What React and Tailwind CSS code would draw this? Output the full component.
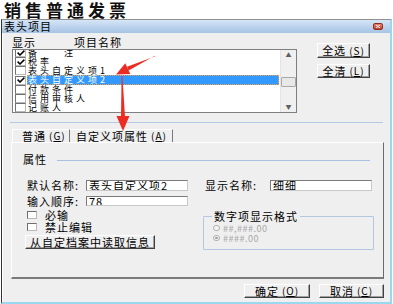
import React from "react";

function Check({ checked, className = "" }) {
  return (
    <span className={"flex items-center justify-center shrink-0 bg-white border border-t-[#707070] border-l-[#707070] border-r-[#b8b8b8] border-b-[#b8b8b8] " + className}>
      {checked && (
        <svg width="8" height="6" viewBox="0 0 8 6">
          <path d="M0.6 2.6 L3 5 L7.4 0.6" stroke="#000" strokeWidth="1.5" fill="none" />
        </svg>
      )}
    </span>
  );
}

function Row({ checked, selected, children }) {
  return (
    <div className={"flex items-center " + (selected ? "h-[10px]" : "h-[9px]")}>
      <Check checked={checked} className="ml-[2px] w-[11px] h-[9px]" />
      {selected ? (
        <span className="ml-[1px] mr-[1px] flex-1 h-[10px] flex items-center bg-[#3399ff] border border-dotted border-[#f5a040] text-white text-[9px] leading-[8px] tracking-[3px]">
          {children}
        </span>
      ) : (
        <span className="ml-[2px] text-[9px] leading-[9px] tracking-[3px] flex items-center">{children}</span>
      )}
    </div>
  );
}

const btn =
  "flex items-center justify-center bg-[#efefef] border border-t-white border-l-white border-r-[#404040] border-b-[#404040] shadow-[inset_-1px_-1px_0_#a0a0a0] text-[11px] leading-none text-black tracking-[1px]";

const sunken =
  "bg-white border border-t-[#7a7a7a] border-l-[#7a7a7a] border-r-[#c8c8c8] border-b-[#c8c8c8] text-[11px] leading-[9px] tracking-[1px] pl-[2px] flex items-center overflow-hidden";

export default function App() {
  return (
    <div className="relative w-[393px] h-[304px] overflow-hidden bg-white text-black font-[family-name:'Noto_Sans_CJK_SC','Liberation_Sans',sans-serif]">
      <div className="h-[19px] pl-[4px] pt-[1px] text-[17px] leading-[18px] font-semibold tracking-[4px] text-[#111]">
        销售普通发票
      </div>

      <div className="ml-px w-[391px] h-[285px] flex flex-col border-t border-t-[#909090] border-l border-l-[#333333] border-r-2 border-r-[#9ad8f0] border-b-2 border-b-[#9ad8f0]">
        {/* title bar */}
        <div className="h-[13px] shrink-0 flex items-center bg-linear-to-b from-[#d6e5f6] to-[#a6c3e5] pl-[2px] pr-[7px]">
          <span className="text-[11px] leading-none tracking-[1px]">表头项目</span>
          <span className="ml-auto w-[10px] h-[7px] rounded-[2px] bg-linear-to-b from-[#e8826c] to-[#c7402c] border border-[#8e2f22] flex items-center justify-center">
            <svg width="4" height="3" viewBox="0 0 4 3">
              <path d="M0 0 L4 3 M4 0 L0 3" stroke="#fff" strokeWidth="0.9" />
            </svg>
          </span>
        </div>

        {/* body */}
        <div className="flex-1 bg-[#efefef] border-l border-l-white flex flex-col">
          <div className="mt-[3px] flex">
            <div className="ml-[9px] flex flex-col">
              <div className="h-[13px] flex items-center text-[11px] leading-none tracking-[1px]">
                <span className="w-[62px]">显示</span>
                <span>项目名称</span>
              </div>
              <div className="w-[285px] h-[64px] bg-white border border-[#7f7f7f] flex overflow-hidden">
                <div className="flex-1 flex flex-col -mt-[2px]">
                  <Row checked>
                    <span>备</span>
                    <span className="ml-[24px]">注</span>
                  </Row>
                  <Row checked>税率</Row>
                  <Row>表头自定义项1</Row>
                  <Row checked selected>表头自定义项2</Row>
                  <Row>付款条件</Row>
                  <Row>信用审核人</Row>
                  <Row>记账人</Row>
                </div>
                <div className="w-[16px] bg-[#f0f0f0] border-l border-l-[#e4e4e4] flex flex-col items-center">
                  <span className="mt-[2px] text-[6px] leading-none text-[#606060]">▲</span>
                  <span className="mt-[19px] w-[15px] h-[10px] bg-[#e8e8e8] border border-[#a8a8a8] rounded-[1px]"></span>
                  <span className="mt-auto mb-[2px] text-[6px] leading-none text-[#606060]">▼</span>
                </div>
              </div>
            </div>
            <div className="ml-[20px] pt-[7px] flex flex-col">
              <div className={btn + " w-[53px] h-[15px]"}>
                全选<span className="ml-[3px] text-[10px]">(<u>S</u>)</span>
              </div>
              <div className={btn + " mt-[6px] w-[53px] h-[14px]"}>
                全清<span className="ml-[3px] text-[10px]">(<u>L</u>)</span>
              </div>
            </div>
          </div>

          <div className="mt-[9px] ml-[7px] w-[373px] h-px bg-[#b4c9e4]"></div>

          {/* tabs */}
          <div className="mt-[6px] ml-[9px] flex h-[13px]">
            <div className="w-[58px] h-[13px] flex items-center pl-[9px] border-t border-l border-t-white border-l-white border-r border-r-[#7a7a7a] text-[11px] leading-none tracking-[1px]">
              普通<span className="ml-[3px] text-[10px]">(<u>G</u>)</span>
            </div>
            <div className="w-[103px] h-[13px] flex items-center pl-[6px] border-t border-t-white border-r border-r-[#7a7a7a] text-[11px] leading-none tracking-[1px]">
              自定义项属性<span className="ml-[3px] text-[10px]">(<u>A</u>)</span>
            </div>
          </div>

          {/* panel */}
          <div className="ml-[8px] w-[373px] h-[137px] border-t border-l border-t-white border-l-white border-r border-r-[#6a6a6a] border-b-2 border-b-[#7a7a7a] flex flex-col">
            <div className="mt-[10px] h-[12px] pl-[11px] pr-[13px] flex items-center">
              <span className="text-[11px] leading-none tracking-[1px]">属性</span>
              <span className="ml-[10px] mt-[3px] flex-1 h-px bg-[#a8c0e0]"></span>
            </div>

            <div className="mt-[15px] h-[10px] pl-[15px] flex items-center">
              <span className="w-[59px] text-[11px] leading-none tracking-[1px]">默认名称:</span>
              <div className={sunken + " w-[102px] h-[11px] bg-[#f3f3f3]"}>表头自定义项2</div>
              <span className="ml-[17px] w-[65px] text-[11px] leading-none tracking-[1px]">显示名称:</span>
              <div className={sunken + " w-[102px] h-[11px]"}>细细</div>
            </div>

            <div className="flex">
              <div className="w-[191px] flex flex-col">
                <div className="mt-[6px] h-[10px] pl-[15px] flex items-center">
                  <span className="w-[59px] text-[11px] leading-none tracking-[1px]">输入顺序:</span>
                  <div className={sunken + " w-[102px] h-[10px] text-[10px] tracking-[0px]"}>78</div>
                </div>
                <div className="mt-[4px] h-[10px] pl-[15px] flex items-center">
                  <Check className="w-[10px] h-[8px]" />
                  <span className="ml-[8px] text-[11px] leading-none tracking-[1px]">必输</span>
                </div>
                <div className="mt-[2px] h-[10px] pl-[15px] flex items-center">
                  <Check className="w-[10px] h-[8px]" />
                  <span className="ml-[8px] text-[11px] leading-none tracking-[1px]">禁止编辑</span>
                </div>
                <div className={btn + " mt-[3px] ml-[13px] w-[130px] h-[14px]"}>从自定档案中读取信息</div>
              </div>
              <div className="mt-[26px] relative w-[171px] h-[34px] border border-[#b3c7e0] rounded-[1px] flex flex-col pl-[9px]">
                <span className="absolute -top-[7px] left-[8px] px-[2px] bg-[#efefef] text-[11px] leading-[12px] tracking-[1px]">
                  数字项显示格式
                </span>
                <div className="mt-[6px] h-[10px] flex items-center text-[9px] leading-none text-[#a8a8a8] tracking-[0.5px]">
                  <span className="w-[7px] h-[6px] rounded-full border border-[#b0b0b0] bg-[#f4f4f4]"></span>
                  <span className="ml-[3px]">##,###.00</span>
                </div>
                <div className="h-[10px] flex items-center text-[9px] leading-none text-[#a8a8a8] tracking-[0.5px]">
                  <span className="w-[7px] h-[6px] rounded-full border border-[#b0b0b0] bg-[#f4f4f4] flex items-center justify-center">
                    <span className="w-[3px] h-[2px] rounded-full bg-[#a0a0a0]"></span>
                  </span>
                  <span className="ml-[3px]">####.00</span>
                </div>
              </div>
            </div>
          </div>

          <div className="mt-[5px] flex justify-end pr-[6px]">
            <div className={btn + " w-[66px] h-[14px]"}>
              确定<span className="ml-[3px] text-[10px]">(<u>O</u>)</span>
            </div>
            <div className={btn + " ml-[9px] w-[65px] h-[14px]"}>
              取消<span className="ml-[3px] text-[10px]">(<u>C</u>)</span>
            </div>
          </div>
        </div>
      </div>

      {/* red annotation arrows */}
      <svg className="absolute inset-0 pointer-events-none" width="393" height="304" viewBox="0 0 393 304">
        <polygon points="155.3,55.6 154.7,56.4 127.0,66.8 128.6,70.4" fill="#ec2c22" />
        <polygon points="125.3,63.2 130.3,74.0 116,74.5" fill="#ec2c22" />
        <polygon points="121.6,76 122.4,76 125,117 121,117" fill="#ec2c22" />
        <polygon points="116.5,116 129.5,116 123,131" fill="#ec2c22" />
      </svg>
    </div>
  );
}
